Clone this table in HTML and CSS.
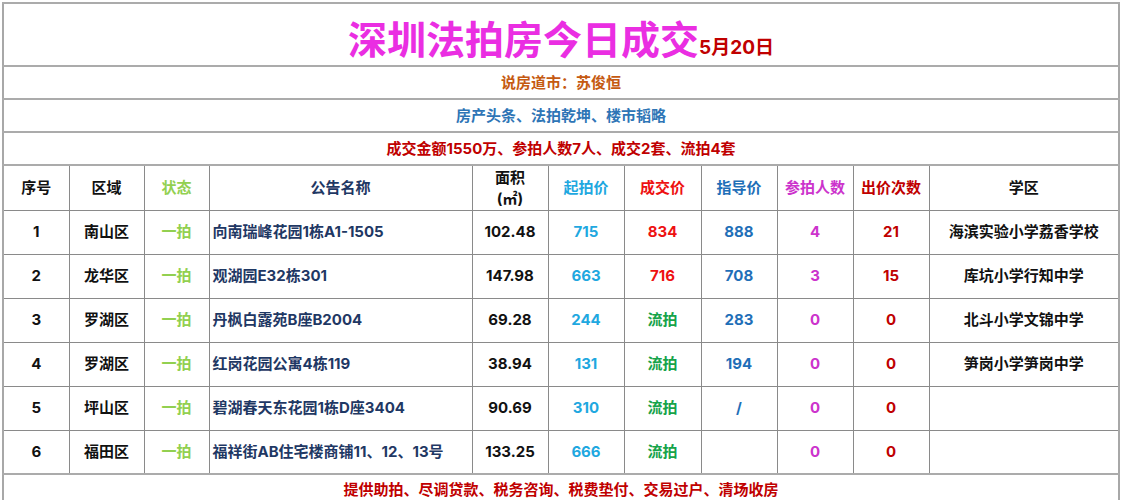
FILE: index.html
```html
<!DOCTYPE html>
<html lang="zh-CN">
<head>
<meta charset="utf-8">
<title>深圳法拍房今日成交</title>
<link rel="stylesheet" href="styles.css">
</head>
<body>
<table class="sheet">
  <colgroup>
    <col class="c1"><col class="c2"><col class="c3"><col class="c4"><col class="c5"><col class="c6"><col class="c7"><col class="c8"><col class="c9"><col class="c10"><col class="c11">
  </colgroup>
  <tr class="r-title"><td colspan="11" class="title"><span class="big">深圳法拍房今日成交</span><span class="date">5月20日</span></td></tr>
  <tr class="r-info"><td colspan="11" class="orange">说房道市：苏俊恒</td></tr>
  <tr class="r-info"><td colspan="11" class="blue2">房产头条、法拍乾坤、楼市韬略</td></tr>
  <tr class="r-info"><td colspan="11" class="dred">成交金额1550万、参拍人数7人、成交2套、流拍4套</td></tr>
  <tr class="r-head">
    <td>序号</td><td>区域</td><td class="lgreen">状态</td><td class="navy">公告名称</td><td class="area-h">面积<br>(㎡)</td><td class="sky">起拍价</td><td class="red">成交价</td><td class="blue">指导价</td><td class="mag">参拍人数</td><td class="dred">出价次数</td><td>学区</td>
  </tr>
  <tr class="r-data">
    <td>1</td><td>南山区</td><td class="lgreen">一拍</td><td class="navy name">向南瑞峰花园1栋A1-1505</td><td>102.48</td><td class="sky">715</td><td class="red">834</td><td class="blue">888</td><td class="mag">4</td><td class="dred">21</td><td>海滨实验小学荔香学校</td>
  </tr>
  <tr class="r-data">
    <td>2</td><td>龙华区</td><td class="lgreen">一拍</td><td class="navy name">观湖园E32栋301</td><td>147.98</td><td class="sky">663</td><td class="red">716</td><td class="blue">708</td><td class="mag">3</td><td class="dred">15</td><td>库坑小学行知中学</td>
  </tr>
  <tr class="r-data">
    <td>3</td><td>罗湖区</td><td class="lgreen">一拍</td><td class="navy name">丹枫白露苑B座B2004</td><td>69.28</td><td class="sky">244</td><td class="green">流拍</td><td class="blue">283</td><td class="mag">0</td><td class="dred">0</td><td>北斗小学文锦中学</td>
  </tr>
  <tr class="r-data">
    <td>4</td><td>罗湖区</td><td class="lgreen">一拍</td><td class="navy name">红岗花园公寓4栋119</td><td>38.94</td><td class="sky">131</td><td class="green">流拍</td><td class="blue">194</td><td class="mag">0</td><td class="dred">0</td><td>笋岗小学笋岗中学</td>
  </tr>
  <tr class="r-data">
    <td>5</td><td>坪山区</td><td class="lgreen">一拍</td><td class="navy name">碧湖春天东花园1栋D座3404</td><td>90.69</td><td class="sky">310</td><td class="green">流拍</td><td class="blue">/</td><td class="mag">0</td><td class="dred">0</td><td></td>
  </tr>
  <tr class="r-data">
    <td>6</td><td>福田区</td><td class="lgreen">一拍</td><td class="navy name">福祥街AB住宅楼商铺11、12、13号</td><td>133.25</td><td class="sky">666</td><td class="green">流拍</td><td class="blue"></td><td class="mag">0</td><td class="dred">0</td><td></td>
  </tr>
  <tr class="r-foot"><td colspan="11" class="dred">提供助拍、尽调贷款、税务咨询、税费垫付、交易过户、清场收房</td></tr>
</table>
</body>
</html>
```

FILE: styles.css
```css
html, body {
  margin: 0;
  padding: 0;
  background: #ffffff;
}
body {
  padding: 2px 0 0 2px;
  font-family: "Inter", "Noto Sans CJK SC", sans-serif;
  font-weight: 700;
  font-size: 15px;
  color: #111111;
}
.sheet {
  border-collapse: collapse;
  table-layout: fixed;
  width: 1118px;
  border: 2px solid #a8a8a8;
}
.sheet td {
  border: 1px solid #8a8a8a;
  text-align: center;
  vertical-align: middle;
  padding: 0;
  white-space: nowrap;
  overflow: hidden;
  line-height: 20px;
}
.c1 { width: 66px; }
.c2 { width: 75px; }
.c3 { width: 65px; }
.c4 { width: 263px; }
.c5 { width: 76px; }
.c6 { width: 76px; }
.c7 { width: 77px; }
.c8 { width: 76px; }
.c9 { width: 76px; }
.c10 { width: 76px; }
.c11 { width: 190px; }

.r-title td, .r-info td, .r-foot td {
  border-top: 2px solid #ababab;
  border-bottom: 2px solid #ababab;
  border-left: none;
  border-right: none;
}
.r-title { height: 63px; }
.r-info { height: 33px; }
.r-head { height: 45px; }
.r-data { height: 44px; }
.r-foot { height: 33px; }

.title {
  font-family: "Noto Sans CJK SC", sans-serif;
  padding-top: 4px !important;
}
.big {
  font-size: 39px;
  line-height: 46px;
  color: #ea2ee2;
}
.date {
  font-family: "Inter", "Noto Sans CJK SC", sans-serif;
  font-size: 19px;
  color: #c00000;
}
.sheet td.name {
  text-align: left;
  padding-left: 3px;
}
.area-h { line-height: 21px !important; }

.orange { color: #c55a11; }
.blue2 { color: #2e75b6; }
.dred { color: #c00000; }
.lgreen { color: #92d050; }
.navy { color: #1f3864; }
.sky { color: #1fa8e0; }
.red { color: #ee1111; }
.blue { color: #1f6fb8; }
.mag { color: #cc33cc; }
.green { color: #16a34a; }
.r-foot td { vertical-align: top; padding-top: 5px; }
```
